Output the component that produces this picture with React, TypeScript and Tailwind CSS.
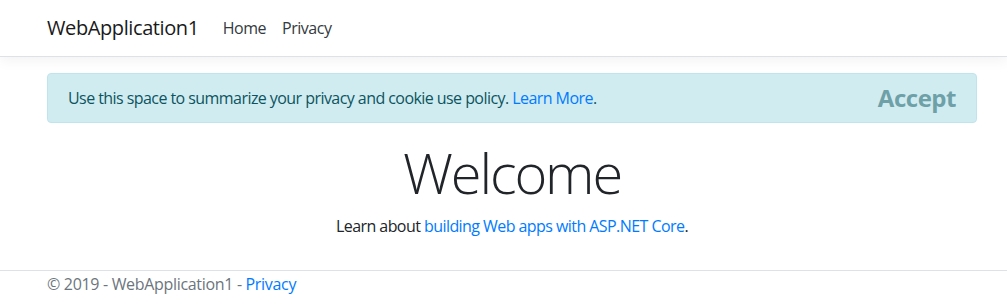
export default function App() {
  return (
    <div className="min-h-screen bg-white font-['Open_Sans',sans-serif] text-base leading-6 text-[#212529]">
      <header>
        <nav className="h-[57px] border-b border-[#dee2e6] bg-white shadow-[0_4px_12px_rgba(0,0,0,0.05)]">
          <div className="ml-[32px] flex h-full w-[960px] items-center px-[15px]">
            <a className="mr-4 text-[20px] leading-[30px] tracking-[-0.02em] text-[#1a1a1a]" href="#">
              WebApplication1
            </a>
            <ul className="flex tracking-[-0.03em]">
              <li>
                <a className="block px-2 py-2 text-[#343a40]" href="#">
                  Home
                </a>
              </li>
              <li>
                <a className="block px-2 py-2 text-[#343a40]" href="#">
                  Privacy
                </a>
              </li>
            </ul>
          </div>
        </nav>
      </header>

      <div className="ml-[32px] w-[960px] px-[15px] pt-4">
        <div className="relative mb-4 rounded-[4px] border border-[#bee5eb] bg-[#d1ecf1] px-5 py-3 pr-16 tracking-[-0.035em] text-[#0c5460]">
          Use this space to summarize your privacy and cookie use policy.{' '}
          <a className="text-[#007bff]" href="#">
            Learn More
          </a>
          .
          <button className="absolute right-0 top-0 px-5 py-3 text-[24px] font-bold leading-6 tracking-[-0.02em] text-[#6ea0a8]">
            Accept
          </button>
        </div>

        <main className="pb-4">
          <div className="text-center">
            <h1 className="mb-2 text-[56px] font-light leading-[1.2] tracking-[-0.038em]">Welcome</h1>
            <p className="mb-4 tracking-[-0.035em]">
              Learn about{' '}
              <a className="text-[#007bff]" href="#">
                building Web apps with ASP.NET Core
              </a>
              .
            </p>
          </div>
        </main>
      </div>

      <footer className="border-t border-[#dee2e6] text-[#6c757d]">
        <div className="ml-[32px] w-[960px] px-[15px] leading-[27px] tracking-[-0.02em]">
          © 2019 - WebApplication1 -{' '}
          <a className="text-[#007bff]" href="#">
            Privacy
          </a>
        </div>
      </footer>
    </div>
  )
}
